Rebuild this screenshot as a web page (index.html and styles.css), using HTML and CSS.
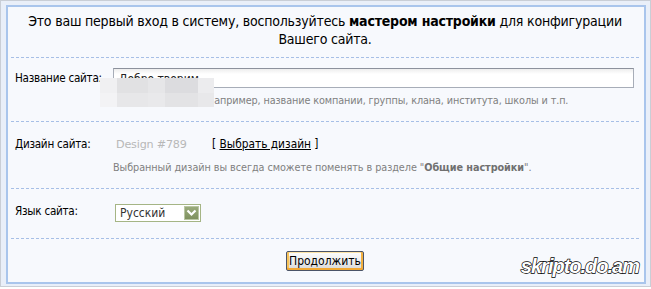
FILE: index.html
```html
<!DOCTYPE html>
<html lang="ru">
<head>
<meta charset="utf-8">
<title>Мастер настройки</title>
<link rel="stylesheet" href="styles.css">
</head>
<body>
<div class="frame">
  <div class="panel">
    <p class="intro">Это ваш первый вход в систему, воспользуйтесь <b>мастером настройки</b> для конфигурации Вашего сайта.</p>

    <div class="section sec-name">
      <div class="label">Название сайта:</div>
      <div class="field">
        <div class="input"><span class="input-text">Добро творим</span></div>
        <div class="hint hint-name">Например, название компании, группы, клана, института, школы и т.п.</div>
      </div>
      <div class="redact">
        <span class="b b1"></span><span class="b b2"></span><span class="b b3"></span><span class="b b4"></span><span class="b b5"></span>
        <span class="b b6"></span><span class="b b7"></span><span class="b b8"></span><span class="b b9"></span><span class="b b10"></span>
      </div>
    </div>

    <div class="section sec-design">
      <div class="label">Дизайн сайта:</div>
      <div class="field">
        <div class="design-row"><span class="design-name">Design #789</span><span class="choose">[ <a href="#">Выбрать дизайн</a> ]</span></div>
        <div class="hint hint-design">Выбранный дизайн вы всегда сможете поменять в разделе "<b>Общие настройки</b>".</div>
      </div>
    </div>

    <div class="section sec-lang">
      <div class="label">Язык сайта:</div>
      <div class="field">
        <div class="select"><span class="select-text">Русский</span><span class="select-btn"><svg width="11" height="8" viewBox="0 0 11 8"><path d="M1.5 1.5 L5.5 5.5 L9.5 1.5" fill="none" stroke="#fff" stroke-width="2.2"/></svg></span></div>
      </div>
    </div>

    <div class="actions">
      <button class="btn" type="button">Продолжить</button>
    </div>

    <div class="watermark">skripto.do.am</div>
  </div>
</div>
</body>
</html>
```

FILE: styles.css
```css
html, body {
  margin: 0;
  padding: 0;
  background: #ffffff;
}

body {
  font-family: "DejaVu Sans", Verdana, sans-serif;
  font-stretch: condensed;
  color: #000;
}

.frame {
  width: 651px;
  height: 287px;
  box-sizing: border-box;
  border: 1px solid #c9ced6;
  padding: 4px 4px 2px 5px;
  background: #e9eff9;
}

.panel {
  position: relative;
  height: 100%;
  box-sizing: border-box;
  border: 2px solid #a9c5ec;
  background: #f7f9fd;
  display: flex;
  flex-direction: column;
}

.intro {
  margin: 0 5px 0 3px;
  padding: 5px 4px 10px;
  height: 35px;
  text-align: center;
  font-size: 14px;
  line-height: 18px;
  border-bottom: 1px dashed #a7bfe6;
  letter-spacing: -0.2px;
}

.intro b {
  font-weight: bold;
}

.section {
  position: relative;
  margin: 0 5px 0 3px;
  padding-left: 4px;
  display: grid;
  grid-template-columns: 98px 1fr;
  border-bottom: 1px dashed #a7bfe6;
  font-size: 11.5px;
}

.label {
  font-size: 11.6px;
  letter-spacing: -0.25px;
}

.sec-name {
  height: 64px;
  box-sizing: border-box;
  padding-top: 10px;
}

.sec-name .label {
  padding-top: 3px;
}

.input {
  width: 521px;
  height: 20px;
  box-sizing: border-box;
  border: 1px solid #a7adb8;
  border-top-color: #8c919c;
  background: linear-gradient(#ededed, #ffffff 5px);
  padding: 3px 5px 0;
  font-size: 12px;
  overflow: hidden;
  color: #222;
}

.hint {
  color: #808080;
  font-size: 10.75px;
}

.hint-name {
  margin-top: 6px;
  padding-left: 94px;
  letter-spacing: -0.1px;
}

.redact {
  position: absolute;
  left: 89px;
  top: 20px;
  width: 114px;
  height: 29px;
  display: grid;
  grid-template-columns: 17px 31px 17px 33px 16px;
  grid-template-rows: 15px 14px;
}

.b { display: block; }
.b1 { background: #f0f0f2; }
.b2 { background: #e1e1e3; }
.b3 { background: #e6e6e8; }
.b4 { background: #dcdcdf; }
.b5 { background: #ececee; }
.b6 { background: #f3f3f5; }
.b7 { background: #e7e7e9; }
.b8 { background: #e9e9eb; }
.b9 { background: #e3e3e5; }
.b10 { background: #e8e8ea; }

.sec-design {
  height: 67px;
  box-sizing: border-box;
  padding-top: 15px;
}

.design-row {
  display: flex;
  align-items: baseline;
  height: 17px;
}

.design-name {
  color: #b8b8b8;
  font-size: 11.2px;
  font-stretch: normal;
  width: 96px;
  padding-left: 3px;
  letter-spacing: -0.2px;
}

.choose {
  font-size: 11.8px;
  color: #000;
}

.choose a {
  color: #000;
  text-decoration: underline;
}

.hint-design {
  margin-top: 7px;
  letter-spacing: -0.05px;
}

.hint-design b {
  color: #707070;
}

.sec-lang {
  height: 50px;
  box-sizing: border-box;
  padding-top: 15px;
}

.select {
  margin-left: 2px;
  width: 86px;
  height: 18px;
  box-sizing: border-box;
  border: 1px solid #a5b585;
  background: #fff;
  display: flex;
  align-items: center;
  justify-content: space-between;
  padding: 0 1px 0 4px;
}

.select-text {
  font-size: 12px;
  color: #333;
}

.select-btn {
  width: 15px;
  height: 14px;
  background: linear-gradient(#9aab7c, #7f915f);
  border: 1px solid #b9c6a3;
  box-sizing: border-box;
  display: flex;
  align-items: center;
  justify-content: center;
}

.actions {
  flex: 1;
  display: flex;
  justify-content: center;
  align-items: flex-start;
  padding-top: 12px;
}

.btn {
  width: 78px;
  height: 20px;
  padding: 0;
  border: 1px solid #4a5468;
  border-radius: 2px;
  background: linear-gradient(#fdfdfd, #eaeaea 60%, #d6d6d6);
  box-shadow: inset 0 -2px 0 #f2a832, inset 2px 0 0 #f8c45c, inset -2px 0 0 #f2b040, inset 0 1px 0 #fde4a8;
  font-family: "DejaVu Sans", Verdana, sans-serif;
  font-stretch: condensed;
  font-size: 12px;
  color: #000;
  margin-right: 2px;
}

.watermark {
  position: absolute;
  right: 5px;
  bottom: 4px;
  font-family: "Liberation Sans", Arial, sans-serif;
  font-stretch: normal;
  font-style: italic;
  font-weight: bold;
  font-size: 20px;
  letter-spacing: -1px;
  color: #fff;
  -webkit-text-stroke: 1.3px #000;
  paint-order: stroke fill;
}
```
